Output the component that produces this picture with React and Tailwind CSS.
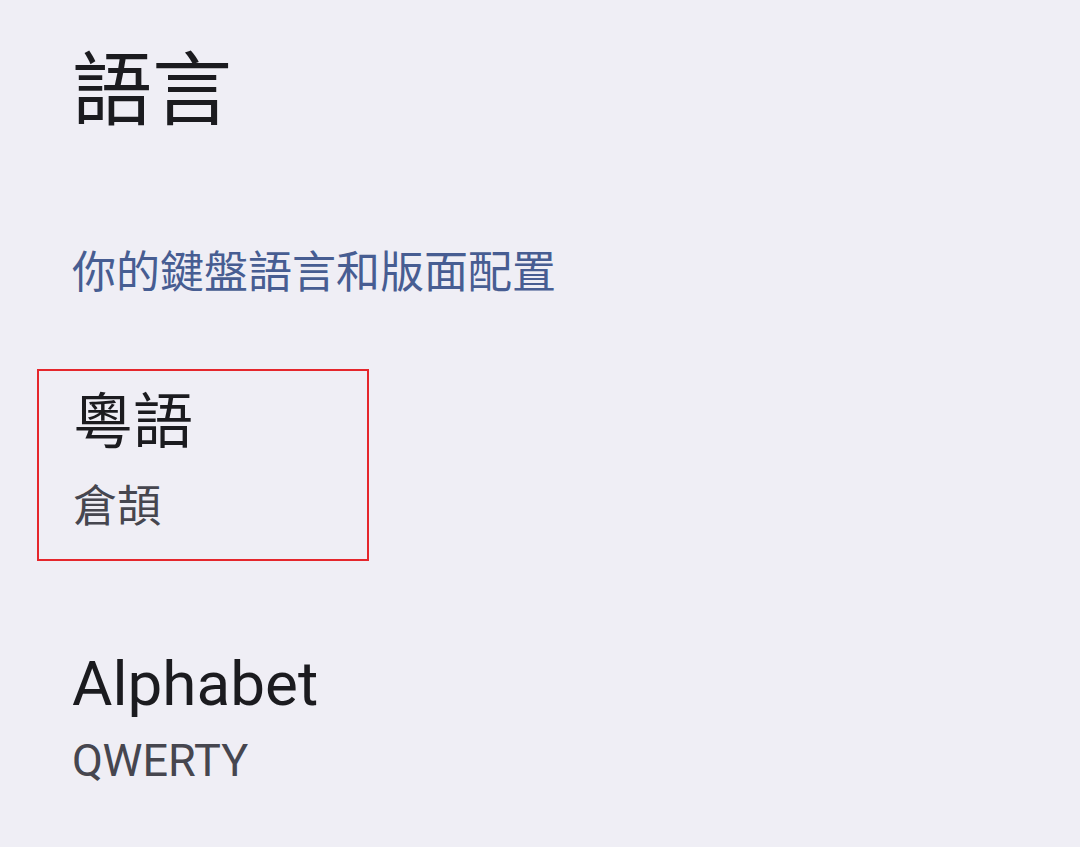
const font = {
  fontFamily: '"Roboto", "Noto Sans CJK TC", "Noto Sans", sans-serif',
};

function LayoutItem({ title, subtitle, outlined }) {
  return (
    <div
      className={
        outlined
          ? "w-[332px] border-2 border-[#e5262c] px-[34px] pt-[16px] pb-[24px]"
          : "px-[36px]"
      }
    >
      <div className="text-[60px] leading-[72px] text-[#1b1b1f]">{title}</div>
      <div className="mt-[20px] text-[44px] leading-[56px] text-[#46464f]">
        {subtitle}
      </div>
    </div>
  );
}

export default function App() {
  return (
    <div className="min-h-screen bg-[#efeef5]" style={font}>
      <h1 className="pl-[72px] pt-[43px] text-[80px] leading-[96px] font-normal text-[#1b1b1f]">
        語言
      </h1>

      <p className="mt-[106px] pl-[72px] text-[44px] leading-[56px] text-[#475d92]">
        你的鍵盤語言和版面配置
      </p>

      <div className="mt-[68px] flex flex-col pl-[37px]">
        <LayoutItem title="粵語" subtitle="倉頡" outlined />
        <div className="mt-[86px] pl-[35px]">
          <div className="text-[62px] leading-[74px] text-[#1b1b1f]">Alphabet</div>
          <div className="mt-[12px] text-[45px] leading-[56px] text-[#46464f]">
            QWERTY
          </div>
        </div>
      </div>
    </div>
  );
}
